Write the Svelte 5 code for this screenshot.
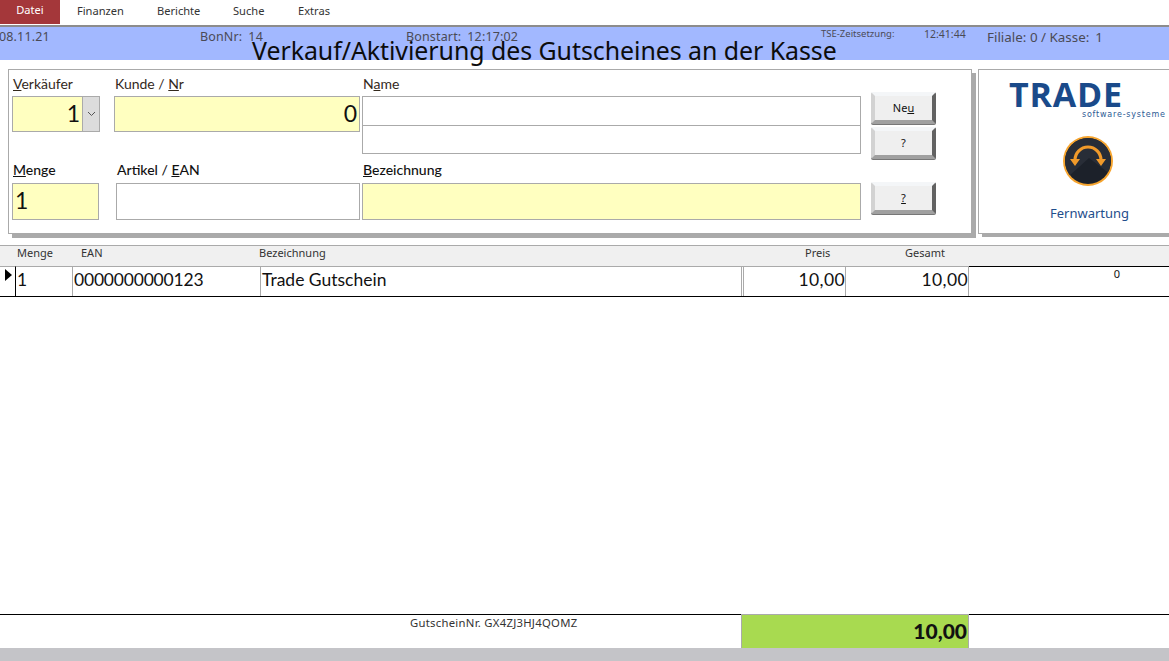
<script lang="ts">
  const menu = ['Finanzen', 'Berichte', 'Suche', 'Extras'];
</script>

<div class="page">
  <nav class="menu">
    <span class="tab">Datei</span>
    {#each menu as item}
      <span class="menu-item">{item}</span>
    {/each}
  </nav>

  <header class="status">
    <span class="date">08.11.21</span>
    <span class="bon">BonNr:<b>14</b></span>
    <span class="start">Bonstart:<b>12:17:02</b></span>
    <span class="tse">TSE-Zeitsetzung:</span>
    <span class="tse-time">12:41:44</span>
    <span class="filiale">Filiale: 0 / Kasse:<b>1</b></span>
    <h1>Verkauf/Aktivierung des Gutscheines an der Kasse</h1>
  </header>

  <section class="top">
    <form class="panel">
      <div class="col col-a">
        <label for="vk"><u>V</u>erkäufer</label>
        <div class="combo">
          <span class="field yellow right" id="vk">1</span>
          <span class="drop">
            <svg width="9" height="6" viewBox="0 0 9 6"><path d="M1 1l3.5 3.5L8 1" fill="none" stroke="#555" stroke-width="1" /></svg>
          </span>
        </div>
      </div>
      <div class="col col-b">
        <label for="kd">Kunde / <u>N</u>r</label>
        <span class="field yellow right" id="kd">0</span>
      </div>
      <div class="col col-c">
        <label for="nm">N<u>a</u>me</label>
        <span class="field name" id="nm"></span>
        <span class="field name second"></span>
      </div>
      <div class="col col-d">
        <button type="button">Ne<u>u</u></button>
        <button type="button">?</button>
      </div>

      <div class="col col-a">
        <label class="strong" for="mg"><u>M</u>enge</label>
        <span class="field yellow tall qty" id="mg">1</span>
      </div>
      <div class="col col-b art">
        <label class="strong" for="ar">Artikel / <u>E</u>AN</label>
        <span class="field tall" id="ar"></span>
      </div>
      <div class="col col-c">
        <label class="strong" for="bz"><u>B</u>ezeichnung</label>
        <span class="field yellow tall" id="bz"></span>
      </div>
      <div class="col col-d lone">
        <button type="button"><u>?</u></button>
      </div>
    </form>

    <aside class="brand">
      <div class="logo">
        <span class="trade">TRADE</span>
        <span class="soft">software-systeme</span>
      </div>
      <svg class="remote" width="52" height="52" viewBox="0 0 52 52">
        <defs>
          <clipPath id="disc"><circle cx="26" cy="26" r="23" /></clipPath>
        </defs>
        <circle cx="26" cy="26" r="25" fill="#f6a42e" />
        <circle cx="26" cy="26" r="23" fill="#1c212a" />
        <path d="M0 0h52v42L27 23 6 42H0z" fill="#282d37" clip-path="url(#disc)" />
        <path d="M13 25A13 13 0 0 1 39 25" fill="none" stroke="#f19a2a" stroke-width="3.2" />
        <path d="M8 24h10l-5 7zM34 24h10l-5 7z" fill="#f19a2a" />
      </svg>
      <span class="remote-label">Fernwartung</span>
    </aside>
  </section>

  <div class="grid-head">
    <span>Menge</span>
    <span>EAN</span>
    <span>Bezeichnung</span>
    <span>Preis</span>
    <span>Gesamt</span>
  </div>
  <div class="grid-row">
    <span class="marker"><i></i></span>
    <span class="cell">1</span>
    <span class="cell ean">0000000000123</span>
    <span class="cell dbl">Trade Gutschein</span>
    <span class="cell num">10,00</span>
    <span class="cell num">10,00</span>
    <span class="cell last">0</span>
  </div>

  <div class="spacer"></div>

  <footer class="sum">
    <span class="voucher">GutscheinNr. GX4ZJ3HJ4QOMZ</span>
    <strong class="total">10,00</strong>
    <span class="blank"></span>
  </footer>
  <div class="bottom-bar"></div>
</div>

<style>
  :global(body) { margin: 0; background: #fff; }
  * { box-sizing: border-box; }
  .page {
    width: 1169px;
    height: 661px;
    display: flex;
    flex-direction: column;
    overflow: hidden;
    font-family: Lato, "Open Sans", sans-serif;
    color: #111;
  }

  .menu {
    height: 27px;
    display: grid;
    grid-template-columns: 77px 80px 76px 65px auto;
    border-bottom: 2px solid #8c8c8c;
    font-family: "Noto Sans", sans-serif;
    font-size: 11.1px;
    color: #333;
  }
  .tab {
    width: 60px;
    height: 24px;
    padding-top: 2px;
    text-align: center;
    color: #fff;
    background: #a4373a;
  }
  .menu-item { padding-top: 3px; }

  .status {
    position: relative;
    height: 33px;
    display: flex;
    background: #a2b8ff;
    color: #4a4a55;
    font-family: "Noto Sans", sans-serif;
    font-size: 12.5px;
    letter-spacing: 0.15px;
    white-space: nowrap;
  }
  .status b { font-weight: 400; margin-left: 6px; }
  .date { width: 201px; padding-top: 1px; margin-left: -1px; }
  .bon { width: 206px; padding-top: 1px; }
  .start { width: 415px; padding-top: 1px; }
  .tse { width: 103px; font-size: 9.5px; letter-spacing: 0; }
  .tse-time { width: 63px; font-size: 10.5px; letter-spacing: 0; }
  .filiale { font-size: 13.4px; padding-top: 1px; letter-spacing: 0; }
  h1 {
    position: absolute;
    left: 252px;
    top: 7px;
    margin: 0;
    font-size: 24.9px;
    font-weight: 400;
    line-height: 32px;
    letter-spacing: -0.04px;
    color: #0c0c0c;
  }

  .top {
    display: flex;
    padding: 9px 0 0 8px;
    gap: 2px;
  }
  .panel {
    width: 964px;
    height: 165px;
    padding: 5px 0 0 3px;
    display: grid;
    grid-template-columns: 88px 262px 499px 75px;
    grid-template-rows: 86px auto;
    border: 1px solid #aaa;
    background: #fff;
    box-shadow: 4px 4px 0 #aaa;
  }
  .col { display: flex; flex-direction: column; min-width: 0; }
  label {
    height: 21px;
    padding-left: 1px;
    font-size: 14px;
    line-height: 18px;
    color: #33291c;
  }
  label.strong { height: 22px; color: #111; font-weight: 500; }
  .col-b { padding-left: 14px; padding-right: 2px; }
  .art { padding-left: 16px; }
  .col-d { padding: 17px 0 0 10px; gap: 3px; }
  .lone { padding-top: 21px; }

  .field {
    display: block;
    height: 36px;
    border: 1px solid #aaa;
    background: #fff;
    font-size: 23px;
    line-height: 32px;
    padding: 0 2px;
  }
  .yellow { background: #ffffc0; }
  .right { text-align: right; }
  .name { height: 30px; }
  .second { height: 29px; margin-top: -1px; }
  .tall { height: 37px; }
  .qty { width: 87px; line-height: 33px; }

  .combo { display: flex; height: 36px; }
  .combo .field { flex: 1; }
  .drop {
    width: 17px;
    display: grid;
    place-items: center;
    background: #dcdcdc;
    border: 1px solid #aaa;
    border-left: 0;
  }

  button {
    width: 65px;
    height: 32px;
    padding: 0 0 1px;
    font-family: "Noto Sans", sans-serif;
    font-size: 11px;
    color: #111;
    background: #efefef;
    border: 4px solid;
    border-color: #f4f6f8 #626262 #a0a0a0 #d2d2d2;
    border-radius: 2px;
    box-shadow: 0 1px 0 #777;
  }

  .brand {
    flex: 1;
    height: 165px;
    display: flex;
    flex-direction: column;
    align-items: flex-start;
    border: 1px solid #aaa;
    border-right: 0;
    background: #fff;
    box-shadow: 4px 3px 0 #aaa;
    margin-left: 4px;
  }
  .logo { display: flex; flex-direction: column; margin: 5px 0 0 30px; color: #1a4a8a; }
  .trade {
    font-family: "Open Sans", sans-serif;
    font-weight: 700;
    font-size: 34px;
    line-height: 38px;
    letter-spacing: 0.8px;
  }
  .soft {
    align-self: flex-end;
    margin: -3px -43px 0 0;
    font-family: "DejaVu Sans", sans-serif;
    font-size: 8px;
    line-height: 10px;
    letter-spacing: 0.8px;
    color: #2c5a94;
  }
  .remote { margin: 15px 0 0 83px; }
  .remote-label {
    margin: 18px 0 0 71px;
    font-family: "Noto Sans", sans-serif;
    font-size: 13px;
    line-height: 16px;
    color: #1f4e8c;
  }

  .grid-head {
    margin-top: 11px;
    height: 21px;
    display: grid;
    grid-template-columns: 17px 64px 178px 546px 100px auto;
    border-top: 1px solid #aaa;
    background: #f0f0f0;
    font-family: "Noto Sans", sans-serif;
    font-size: 11px;
    line-height: 14px;
    color: #333;
  }
  .grid-head span:first-child { grid-column: 1 / 3; padding-left: 17px; }
  .grid-head span { white-space: nowrap; }

  .grid-row {
    height: 31px;
    display: grid;
    grid-template-columns: 16px 57px 188px 483px 102px 123px auto;
    border-bottom: 1px solid #000;
  }
  .marker { position: relative; border-right: 1px solid #000; border-top: 1px solid #aaa; }
  .marker i {
    position: absolute;
    left: 5px;
    top: 2px;
    border-left: 7px solid #000;
    border-top: 6px solid transparent;
    border-bottom: 6px solid transparent;
  }
  .cell {
    padding: 0 1px;
    border-top: 1px solid #aaa;
    border-right: 1px solid #aaa;
    font-size: 17.5px;
    line-height: 25px;
    overflow: hidden;
    white-space: nowrap;
  }
  .ean { letter-spacing: -0.2px; }
  .dbl { border-right: 3px double #aaa; }
  .num { text-align: right; padding-right: 0; letter-spacing: 0.4px; }
  .last {
    border-top: 1px solid #000;
    border-right: 0;
    text-align: right;
    padding-right: 49px;
    font-family: "Noto Sans", sans-serif;
    font-size: 11px;
    line-height: 14px;
  }

  .spacer { flex: 1; }

  .sum {
    height: 34px;
    display: grid;
    grid-template-columns: 741px 228px auto;
    border-top: 1px solid #000;
  }
  .voucher {
    padding: 0 0 0 410px;
    font-family: "Noto Sans", sans-serif;
    font-size: 11.3px;
    line-height: 15px;
    letter-spacing: 0.27px;
    color: #333;
    white-space: nowrap;
  }
  .total {
    margin-top: -1px;
    padding-right: 1px;
    text-align: right;
    background: #a8da50;
    border: 1px solid #aaa;
    border-bottom: 0;
    font-size: 21px;
    line-height: 32px;
    font-weight: 900;
  }
  .bottom-bar { height: 13px; background: #c4c4c8; }
</style>
